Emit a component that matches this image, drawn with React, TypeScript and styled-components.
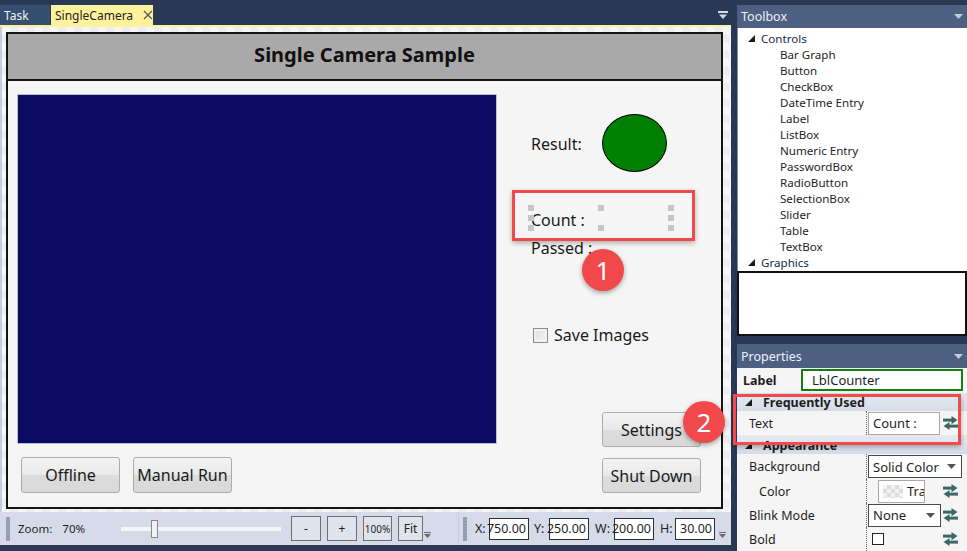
import React from 'react';
import styled, { createGlobalStyle } from 'styled-components';

const FONT = `"Noto Sans", "Open Sans", sans-serif`;

const GlobalStyle = createGlobalStyle`
  html, body {
    margin: 0;
    padding: 0;
    background: #293955;
  }
  body {
    font-family: ${FONT};
    color: #1e1e1e;
  }
  * {
    box-sizing: border-box;
  }
`;

const Shell = styled.div`
  width: 967px;
  height: 551px;
  display: flex;
  overflow: hidden;
  background: #293955;
`;

/* ---------- document (left) ---------- */

const DocColumn = styled.div`
  width: 731px;
  display: flex;
  flex-direction: column;
`;

const TabStrip = styled.div`
  height: 25px;
  display: flex;
  align-items: flex-end;
  padding-right: 3px;
`;

const Tab = styled.div<{ $active?: boolean; $width: number }>`
  width: ${p => p.$width}px;
  height: 20px;
  margin-right: 1px;
  padding-left: 4px;
  display: flex;
  align-items: center;
  font-size: 12px;
  background: ${p => (p.$active ? '#fff29d' : '#364e6f')};
  color: ${p => (p.$active ? '#1e1e1e' : '#f2f5fa')};
`;

const TabClose = styled.svg`
  margin-left: 10px;
`;

const StripMenu = styled.svg`
  margin: 0 0 6px auto;
`;

const AccentLine = styled.div`
  height: 2px;
  background: #fff29d;
`;

const Canvas = styled.div`
  flex: 1;
  display: flex;
  min-height: 0;
  padding: 5px 8px 3px 4px;
  border-left: 2px solid #c5cde0;
  background: repeating-conic-gradient(#eceef3 0 25%, #f7f7f8 0 50%) 0 0 / 16px 16px;
`;

const Form = styled.div`
  flex: 1;
  display: flex;
  flex-direction: column;
  border: 2px solid #141414;
  background: #f5f5f5;
`;

const FormHeader = styled.div`
  height: 47px;
  padding-bottom: 4px;
  border-bottom: 2px solid #141414;
  background: #a9a9a9;
  display: flex;
  align-items: center;
  justify-content: center;
  font-size: 20px;
  font-weight: 700;
  color: #111;
`;

const FormBody = styled.div`
  flex: 1;
  display: flex;
  padding: 13px 20px 14px 9px;
`;

const LeftPane = styled.div`
  width: 480px;
  display: flex;
  flex-direction: column;
`;

const ImageView = styled.div`
  height: 350px;
  background: #0b0b63;
  border: 1px solid #b9bdd2;
`;

const ButtonRow = styled.div`
  display: flex;
  gap: 13px;
  margin-top: 13px;
  padding-left: 4px;
`;

const FormButton = styled.div<{ $h?: number }>`
  position: relative;
  width: 99px;
  height: ${p => p.$h ?? 36}px;
  display: flex;
  align-items: center;
  justify-content: center;
  font-size: 16px;
  color: #1a1a1a;
  border: 1px solid #acacac;
  border-radius: 3px;
  background: linear-gradient(#f4f4f4, #e9e9e9 50%, #dcdcdc 51%, #d9d9d9);
`;

const RightPane = styled.div`
  flex: 1;
  display: flex;
  flex-direction: column;
  padding-left: 34px;
  font-size: 16px;
  color: #1a1a1a;
`;

const ResultRow = styled.div`
  display: flex;
  align-items: center;
  height: 58px;
  margin-top: 20px;
`;

const ResultLabel = styled.span`
  width: 71px;
  padding-top: 2px;
`;

const Lamp = styled.div`
  width: 65px;
  height: 58px;
  border-radius: 50%;
  border: 1px solid #000;
  background: #008000;
`;

const SelectedLabel = styled.div`
  position: relative;
  width: 140px;
  height: 27px;
  margin-top: 33px;
  display: flex;
  align-items: center;
  padding-top: 2px;
`;

const Handle = styled.span<{ $x: number; $y: number }>`
  position: absolute;
  left: ${p => p.$x}px;
  top: ${p => p.$y}px;
  width: 6px;
  height: 6px;
  background: #c6c6c6;
`;

const Callout = styled.div<{ $x: number; $y: number; $w: number; $h: number }>`
  position: absolute;
  left: ${p => p.$x}px;
  top: ${p => p.$y}px;
  width: ${p => p.$w}px;
  height: ${p => p.$h}px;
  border: 3px solid #f14a4c;
  box-shadow: 0 2px 5px rgba(0, 0, 0, 0.3);
  pointer-events: none;
  z-index: 5;
`;

const Bubble = styled.div<{ $x: number; $y: number }>`
  position: absolute;
  left: ${p => p.$x}px;
  top: ${p => p.$y}px;
  width: 42px;
  height: 42px;
  border-radius: 50%;
  background: #f0484b;
  color: #fff;
  font-size: 26px;
  display: flex;
  align-items: center;
  justify-content: center;
  box-shadow: 0 2px 5px rgba(0, 0, 0, 0.35);
  z-index: 6;
`;

const PlainLabel = styled.div`
  margin-top: 6px;
  line-height: 20px;
`;

const CheckRow = styled.div`
  display: flex;
  align-items: center;
  gap: 6px;
  height: 20px;
  margin-top: 67px;
  padding-left: 2px;
`;

const CheckBox = styled.span`
  width: 15px;
  height: 15px;
  border: 1px solid #8d8d8d;
  background: linear-gradient(135deg, #dedede, #f6f6f6);
  box-shadow: inset 0 0 0 2px #f0f0f0;
`;

const RightButtons = styled.div`
  margin-top: auto;
  display: flex;
  flex-direction: column;
  align-items: flex-end;
  gap: 11px;
`;

/* ---------- zoom / position bar ---------- */

const ZoomBar = styled.div`
  height: 33px;
  display: flex;
  background: #d6dbe9;
  font-size: 11.5px;
  color: #1e1e1e;
`;

const BarSection = styled.div<{ $w?: number }>`
  ${p => (p.$w ? `width: ${p.$w}px;` : 'flex: 1;')}
  display: flex;
  align-items: center;
  padding-left: 6px;
  position: relative;
  & + & {
    border-left: 1px solid #c9cfdd;
    padding-left: 4px;
  }
`;

const Gripper = styled.span`
  width: 4px;
  height: 24px;
  flex-shrink: 0;
  background-image: radial-gradient(#8f99ab 0.8px, transparent 1px);
  background-size: 2px 3px;
`;

const BarText = styled.span<{ $ml: number }>`
  margin-left: ${p => p.$ml}px;
`;

const Slider = styled.div`
  position: relative;
  width: 160px;
  height: 4px;
  margin-left: 36px;
  flex-shrink: 0;
  background: #f5f6f9;
`;

const SliderThumb = styled.span`
  position: absolute;
  left: 30px;
  top: -7px;
  width: 7px;
  height: 18px;
  background: #f2f2f2;
  border: 1px solid #8a8a8a;
`;

const ZoomButtons = styled.div`
  display: flex;
  gap: 6px;
  margin-left: 10px;
`;

const BarButton = styled.div<{ $w: number; $small?: boolean }>`
  width: ${p => p.$w}px;
  height: 25px;
  display: flex;
  align-items: center;
  justify-content: center;
  border: 1px solid #6f6f6f;
  background: #dfe3ec;
  font-size: ${p => (p.$small ? 10 : 12)}px;
`;

const BarMenu = styled.svg`
  position: absolute;
  bottom: 7px;
`;

const CoordLabel = styled.span<{ $w: number; $pl: number }>`
  width: ${p => p.$w}px;
  padding-left: ${p => p.$pl}px;
  flex-shrink: 0;
  font-size: 12.5px;
  white-space: nowrap;
`;

const CoordInput = styled.div`
  width: 40px;
  height: 22px;
  flex-shrink: 0;
  border: 1px solid #2e2e2e;
  background: #fff;
  font-size: 12.5px;
  display: flex;
  align-items: center;
  justify-content: flex-end;
  padding-right: 2px;
`;

const BottomEdge = styled.div`
  height: 6px;
`;

/* ---------- right panel ---------- */

const SidePanel = styled.div`
  width: 230px;
  margin-left: 6px;
  padding-top: 5px;
  display: flex;
  flex-direction: column;
`;

const PaneHeader = styled.div<{ $mt?: number }>`
  height: ${p => (p.$mt ? 24 : 23)}px;
  margin-top: ${p => p.$mt ?? 0}px;
  padding: 0 4px;
  display: flex;
  align-items: center;
  justify-content: space-between;
  background: #4d6082;
  color: #eef1f6;
  font-size: 12.5px;
`;

const ToolboxBody = styled.div`
  height: 243px;
  background: #fff;
  padding: 3px 0 0 10px;
  border-left: 1px solid #7f8aa3;
`;

const TreeRow = styled.div<{ $group?: boolean }>`
  height: 16px;
  display: flex;
  align-items: center;
  font-size: 11.6px;
  padding-left: ${p => (p.$group ? 0 : 32)}px;
  color: ${p => (p.$group ? '#162a45' : '#1e1e1e')};
  gap: 6px;
`;

const PreviewBox = styled.div`
  height: 66px;
  background: #fff;
  border: 2px solid #111;
`;

const PropGrid = styled.div`
  flex: 1;
  display: flex;
  flex-direction: column;
  background: #f5f5f5;
  font-size: 12.5px;
  color: #1e1e1e;
`;

const LabelRow = styled.div`
  height: 25px;
  display: flex;
  align-items: center;
  padding: 0 4px 1px 6px;
  font-weight: 700;
`;

const NameBox = styled.div`
  width: 162px;
  height: 22px;
  margin-left: auto;
  border: 2px solid #138013;
  background: #fff;
  font-weight: 400;
  font-size: 13px;
  display: flex;
  align-items: center;
  padding-left: 9px;
`;

const Category = styled.div<{ $h: number }>`
  position: relative;
  height: ${p => p.$h}px;
  display: flex;
  align-items: center;
  gap: 11px;
  padding: 1px 0 0 8px;
  font-weight: 700;
  background: linear-gradient(#e6e9f1, #d6dce7);
`;

const PropRow = styled.div<{ $h: number }>`
  height: ${p => p.$h}px;
  display: flex;
  align-items: center;
`;

const PropName = styled.div<{ $indent?: boolean }>`
  width: 129px;
  padding-left: ${p => (p.$indent ? 22 : 12)}px;
`;

const PropValue = styled.div`
  flex: 1;
  align-self: stretch;
  display: flex;
  align-items: center;
  padding: 0 9px 0 1px;
  border-left: 1px dotted #6d6d6d;
`;

const ValueBox = styled.div<{ $w: number; $dark?: boolean; $ml?: number }>`
  width: ${p => p.$w}px;
  height: 23px;
  margin-left: ${p => p.$ml ?? 0}px;
  display: flex;
  align-items: center;
  gap: 4px;
  padding: 0 5px 0 4px;
  overflow: hidden;
  white-space: nowrap;
  background: #fff;
  border: 1px solid ${p => (p.$dark ? '#4a4a4a' : '#a9a9a9')};
  font-size: 13px;
`;

const Caret = styled.svg`
  margin-left: auto;
  flex-shrink: 0;
`;

const Swatch = styled.span`
  width: 20px;
  height: 13px;
  flex-shrink: 0;
  background: repeating-conic-gradient(#dcdcdc 0 25%, #f4f4f4 0 50%) 0 0 / 8px 8px;
`;

const BoolBox = styled.span`
  width: 12px;
  height: 12px;
  margin-left: 4px;
  border: 1px solid #222;
  background: #fff;
`;

const SwapSlot = styled.svg`
  margin-left: auto;
  flex-shrink: 0;
`;

/* ---------- small drawings ---------- */

const DownTri = ({ color }: { color: string }) => (
  <svg width="9" height="5" viewBox="0 0 9 5">
    <polygon points="0,0 9,0 4.5,5" fill={color} />
  </svg>
);

const Expanded = () => (
  <svg width="7" height="7" viewBox="0 0 7 7">
    <polygon points="7,0 7,7 0,7" fill="#1a1a1a" />
  </svg>
);

const Swap = () => (
  <SwapSlot width="15" height="14" viewBox="0 0 15 14">
    <rect x="0" y="2.6" width="10" height="3" fill="#3a6964" />
    <polygon points="8.5,0 14.5,4.1 8.5,8.2" fill="#3a6964" />
    <rect x="5" y="8.6" width="10" height="3" fill="#3a6964" />
    <polygon points="6.5,6 0.5,10.1 6.5,14" fill="#3a6964" />
  </SwapSlot>
);

const DropCaret = () => (
  <Caret width="9" height="5" viewBox="0 0 9 5">
    <polygon points="0,0 9,0 4.5,5" fill="#555" />
  </Caret>
);

const BarMenuIcon = ({ pos }: { pos: React.CSSProperties }) => (
  <BarMenu width="7" height="6" viewBox="0 0 7 6" style={pos}>
    <rect x="0" y="0" width="7" height="1" fill="#6a6a6a" />
    <polygon points="0,2 7,2 3.5,6" fill="#6a6a6a" />
  </BarMenu>
);

const toolboxItems = [
  'Bar Graph', 'Button', 'CheckBox', 'DateTime Entry', 'Label', 'ListBox', 'Numeric Entry',
  'PasswordBox', 'RadioButton', 'SelectionBox', 'Slider', 'Table', 'TextBox',
];

const coords = [
  { label: 'X:', w: 22, pl: 8, value: '750.00' },
  { label: 'Y:', w: 20, pl: 5, value: '250.00' },
  { label: 'W:', w: 25, pl: 6, value: '200.00' },
  { label: 'H:', w: 21, pl: 6, value: '30.00' },
];

export default function App() {
  return (
    <>
      <GlobalStyle />
      <Shell>
        <DocColumn>
          <TabStrip>
            <Tab $width={50}>Task</Tab>
            <Tab $width={102} $active>
              SingleCamera
              <TabClose width="10" height="10" viewBox="0 0 10 10">
                <path d="M1 1 L9 9 M9 1 L1 9" stroke="#5a5a5a" strokeWidth="1.3" />
              </TabClose>
            </Tab>
            <StripMenu width="10" height="8" viewBox="0 0 10 8">
              <rect x="0" y="0" width="10" height="2" fill="#d3d9e6" />
              <polygon points="1,3.5 9,3.5 5,8" fill="#d3d9e6" />
            </StripMenu>
          </TabStrip>
          <AccentLine />
          <Canvas>
            <Form>
              <FormHeader>Single Camera Sample</FormHeader>
              <FormBody>
                <LeftPane>
                  <ImageView />
                  <ButtonRow>
                    <FormButton>Offline</FormButton>
                    <FormButton>Manual Run</FormButton>
                  </ButtonRow>
                </LeftPane>
                <RightPane>
                  <ResultRow>
                    <ResultLabel>Result:</ResultLabel>
                    <Lamp />
                  </ResultRow>
                  <SelectedLabel>
                    Count :
                    <Handle $x={-3} $y={0} />
                    <Handle $x={-3} $y={10} />
                    <Handle $x={-3} $y={20} />
                    <Handle $x={67} $y={0} />
                    <Handle $x={67} $y={20} />
                    <Handle $x={137} $y={0} />
                    <Handle $x={137} $y={10} />
                    <Handle $x={137} $y={20} />
                    <Callout $x={-19} $y={-15} $w={183} $h={51} />
                    <Bubble $x={51} $y={44}>1</Bubble>
                  </SelectedLabel>
                  <PlainLabel>Passed :</PlainLabel>
                  <CheckRow>
                    <CheckBox />
                    Save Images
                  </CheckRow>
                  <RightButtons>
                    <FormButton $h={35}>
                      Settings
                      <Bubble $x={80} $y={-12}>2</Bubble>
                    </FormButton>
                    <FormButton $h={35}>Shut Down</FormButton>
                  </RightButtons>
                </RightPane>
              </FormBody>
            </Form>
          </Canvas>
          <ZoomBar>
            <BarSection $w={458}>
              <Gripper />
              <BarText $ml={8}>Zoom:</BarText>
              <BarText $ml={10}>70%</BarText>
              <Slider>
                <SliderThumb />
              </Slider>
              <ZoomButtons>
                <BarButton $w={30}>-</BarButton>
                <BarButton $w={30}>+</BarButton>
                <BarButton $w={29} $small>100%</BarButton>
                <BarButton $w={25}>Fit</BarButton>
              </ZoomButtons>
              <BarMenuIcon pos={{ left: 424 }} />
            </BarSection>
            <BarSection>
              <Gripper />
              {coords.map(c => (
                <React.Fragment key={c.label}>
                  <CoordLabel $w={c.w} $pl={c.pl}>{c.label}</CoordLabel>
                  <CoordInput>{c.value}</CoordInput>
                </React.Fragment>
              ))}
              <BarMenuIcon pos={{ right: 5 }} />
            </BarSection>
          </ZoomBar>
          <BottomEdge />
        </DocColumn>

        <SidePanel>
          <PaneHeader>
            Toolbox
            <DownTri color="#c3ccdc" />
          </PaneHeader>
          <ToolboxBody>
            <TreeRow $group>
              <Expanded />
              Controls
            </TreeRow>
            {toolboxItems.map(item => (
              <TreeRow key={item}>{item}</TreeRow>
            ))}
            <TreeRow $group>
              <Expanded />
              Graphics
            </TreeRow>
          </ToolboxBody>
          <PreviewBox />
          <PaneHeader $mt={8}>
            Properties
            <DownTri color="#c3ccdc" />
          </PaneHeader>
          <PropGrid>
            <LabelRow>
              Label
              <NameBox>LblCounter</NameBox>
            </LabelRow>
            <Category $h={18}>
              <Expanded />
              Frequently Used
              <Callout $x={-4} $y={1} $w={228} $h={51} />
            </Category>
            <PropRow $h={24}>
              <PropName>Text</PropName>
              <PropValue>
                <ValueBox $w={72}>Count :</ValueBox>
                <Swap />
              </PropValue>
            </PropRow>
            <Category $h={19}>
              <Expanded />
              Appearance
            </Category>
            <PropRow $h={25}>
              <PropName>Background</PropName>
              <PropValue style={{ paddingRight: 4 }}>
                <ValueBox $w={94} $dark>
                  Solid Color
                  <DropCaret />
                </ValueBox>
              </PropValue>
            </PropRow>
            <PropRow $h={24}>
              <PropName $indent>Color</PropName>
              <PropValue>
                <ValueBox $w={47} $ml={10}>
                  <Swatch />
                  Tra
                </ValueBox>
                <Swap />
              </PropValue>
            </PropRow>
            <PropRow $h={24}>
              <PropName>Blink Mode</PropName>
              <PropValue>
                <ValueBox $w={73} $dark>
                  None
                  <DropCaret />
                </ValueBox>
                <Swap />
              </PropValue>
            </PropRow>
            <PropRow $h={24}>
              <PropName>Bold</PropName>
              <PropValue>
                <BoolBox />
                <Swap />
              </PropValue>
            </PropRow>
          </PropGrid>
        </SidePanel>
      </Shell>
    </>
  );
}
